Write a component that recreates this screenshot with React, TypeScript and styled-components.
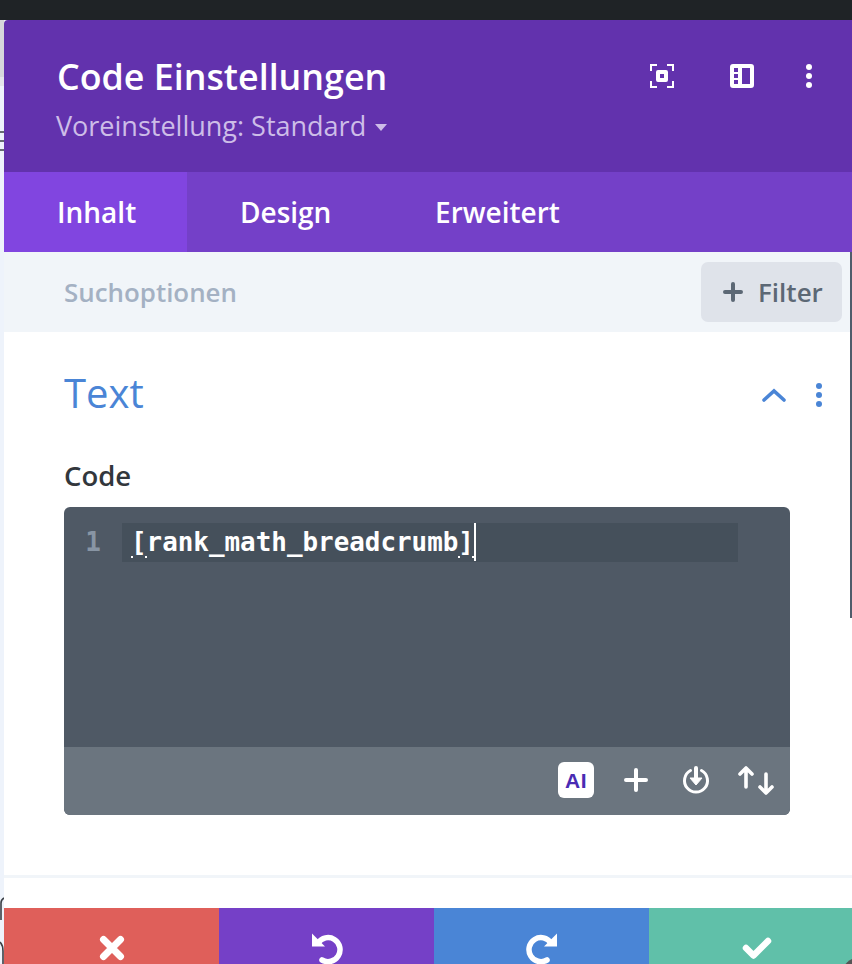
import React from "react";
import styled, { createGlobalStyle } from "styled-components";

const Global = createGlobalStyle`
  html, body { margin: 0; padding: 0; width: 852px; height: 964px; overflow: hidden; background: #eef3fb; }
  * { box-sizing: border-box; }
`;

const Page = styled.div`
  width: 852px; height: 964px; overflow: hidden; position: relative;
  display: flex; flex-direction: column;
  font-family: "Open Sans", sans-serif;
`;
const TopBar = styled.div`height: 20px; flex: none; background: #1f2326;`;
const Stage = styled.div`flex: 1; display: flex; min-height: 0;`;
const Backdrop = styled.div`
  width: 4px; flex: none; display: flex; flex-direction: column; background: #eef3fb;
`;
const BackdropBand = styled.div<{ $h: number; $c: string }>`
  height: ${p => p.$h}px; background: ${p => p.$c}; flex: none;
`;
const BackdropArt = styled.svg`display: block; flex: none;`;
const Modal = styled.div`
  width: 860px; flex: none; display: flex; flex-direction: column;
  background: #fff; border-top-left-radius: 4px; overflow: hidden; position: relative;
`;
const Header = styled.header`
  height: 152px; flex: none; background: #6232ad;
  padding: 31px 52px 0 53px; display: flex; justify-content: space-between;
`;
const HeaderText = styled.div`display: flex; flex-direction: column;`;
const Title = styled.h1`
  margin: 0; font-size: 35.800px; line-height: 50px; font-weight: 550; color: #fff; white-space: nowrap;
`;
const Preset = styled.div`
  margin-top: 7px; margin-left: -1px; font-size: 27px; line-height: 36px; font-weight: 520; color: #cdbde8;
  display: flex; align-items: center; gap: 9px; white-space: nowrap;
`;
const Caret = styled.span`
  width: 0; height: 0; border-left: 6px solid transparent; border-right: 6px solid transparent;
  border-top: 7px solid #cdbde8; margin-top: 3px;
`;
const HeaderIcons = styled.div`
  display: flex; align-items: center; height: 24px; margin-top: 13px;
`;
const HeaderIcon = styled.svg<{ $ml?: number }>`margin-left: ${p => p.$ml ?? 0}px; display: block; flex: none;`;
const Tabs = styled.nav`
  height: 80px; flex: none; background: #7440c8; display: flex;
`;
const Tab = styled.div<{ $active?: boolean; $w: number; $pl: number }>`
  width: ${p => p.$w}px; padding-left: ${p => p.$pl}px; display: flex; align-items: center;
  background: ${p => (p.$active ? "#8145e0" : "transparent")};
  font-size: 28px; font-weight: 570; color: #fff; white-space: nowrap;
`;
const SearchBar = styled.div`
  height: 80px; flex: none; background: #f1f5f9; display: flex; align-items: center;
  justify-content: space-between; padding: 0 22px 0 60px;
`;
const SearchHint = styled.span`font-size: 25.900px; font-weight: 550; color: #a4b1c3;`;
const FilterButton = styled.div`
  width: 141px; height: 60px; border-radius: 7px; background: #dfe3ea;
  display: flex; align-items: center; padding-left: 22px; gap: 15px;
  font-size: 26px; font-weight: 550; color: #5c6875;
`;
const Panel = styled.section`
  flex: 1; display: flex; flex-direction: column; padding: 0 0 0 60px; min-height: 0;
`;
const SectionHead = styled.div`
  height: 126px; width: 770px; flex: none; display: flex; align-items: center; justify-content: space-between;
`;
const SectionTitle = styled.h2`
  margin: -4px 0 0; font-size: 40px; font-weight: 400; color: #4a85d6; line-height: 50px;
`;
const SectionTools = styled.div`display: flex; align-items: center; gap: 30px; margin-right: 12px;`;
const FieldLabel = styled.div`
  font-size: 27.500px; font-weight: 570; color: #32373c; line-height: 36px; height: 49px;
`;
const Editor = styled.div`
  width: 726px; height: 308px; flex: none; border-radius: 6px; overflow: hidden; background: #4f5965;
  display: flex; flex-direction: column;
`;
const EditorBody = styled.div`flex: 1; display: flex; padding-top: 16px;`;
const Gutter = styled.div`
  width: 58px; flex: none; padding-right: 21px; text-align: right; color: #8895a4;
  font: 700 26px/39px "DejaVu Sans Mono", monospace;
`;
const ActiveLine = styled.div`
  width: 616px; height: 39px; background: #45505b; padding-left: 9px;
  color: #fff; font: 700 25.900px/38px "DejaVu Sans Mono", monospace; white-space: pre; display: flex;
`;
const Bracket = styled.span`
  position: relative;
  &::before, &::after {
    content: ""; position: absolute; bottom: 4px; width: 2px; height: 2px; background: #fff;
  }
  &::before { left: 0; }
  &::after { right: 0; }
`;
const Cursor = styled.span`width: 2px; height: 38px; background: #fff; flex: none;`;
const EditorTools = styled.div`
  height: 68px; flex: none; background: #6b757f; display: flex; align-items: center;
  justify-content: flex-end; padding: 0 15px 2px 0;
`;
const AiTile = styled.div`
  width: 36px; height: 36px; background: #fff; border-radius: 6px; display: flex; align-items: center; justify-content: center;
  font: 700 21px/1 "Liberation Sans", sans-serif; color: #4a2bb3; letter-spacing: 0.5px;
`;
const ToolIcon = styled.svg<{ $ml: number }>`margin-left: ${p => p.$ml}px; display: block; flex: none;`;
const FooterGap = styled.div`
  height: 33px; flex: none; margin: auto 0 0 -60px; border-top: 3px solid #f1f5f9;
`;
const Footer = styled.footer`
  height: 80px; flex: none; display: grid; grid-template-columns: repeat(4, 215px); margin-bottom: -24px;
`;
const FooterButton = styled.div<{ $c: string }>`
  background: ${p => p.$c}; display: flex; align-items: center; justify-content: center;
`;
const Scrollbar = styled.div`
  position: absolute; left: 850px; top: 252px; width: 2px; height: 366px; background: #4f5c6b;
`;
const CornerBlob = styled.div`
  position: absolute; left: 842px; top: 958px; width: 32px; height: 32px; border-radius: 50%; background: #555;
`;

const Dots = ({ c, ...rest }: { c: string } & React.SVGProps<SVGSVGElement>) => (
  <svg width="6" height="24" viewBox="0 0 6 24" {...rest}>
    <circle cx="3" cy="3" r="3" fill={c} />
    <circle cx="3" cy="12" r="3" fill={c} />
    <circle cx="3" cy="21" r="3" fill={c} />
  </svg>
);

export default function App() {
  return (
    <Page>
      <Global />
      <TopBar />
      <Stage>
        <Backdrop>
          <BackdropBand $h={57} $c="#d6d7db" />
          <BackdropBand $h={9} $c="#e4e5ea" />
          <BackdropBand $h={45} $c="#eef3fb" />
          <BackdropBand $h={2} $c="#666c72" />
          <BackdropBand $h={7} $c="#eef3fb" />
          <BackdropBand $h={2} $c="#666c72" />
          <BackdropBand $h={7} $c="#eef3fb" />
          <BackdropBand $h={2} $c="#666c72" />
          <BackdropBand $h={746} $c="#eef3fb" />
          <BackdropArt width="4" height="67" viewBox="0 0 4 67" fill="none">
            <path d="M1 23V6Q1 3 4 1M0 45Q3 48 3 54V67" stroke="#3a3f45" strokeWidth="1.600" />
          </BackdropArt>
        </Backdrop>
        <Modal>
          <Header>
            <HeaderText>
              <Title>Code Einstellungen</Title>
              <Preset>Voreinstellung: Standard<Caret /></Preset>
            </HeaderText>
            <HeaderIcons>
              <HeaderIcon width="24" height="24" viewBox="0 0 24 24" fill="none">
                <path d="M1 7V1h6M17 1h6v6M23 17v6h-6M7 23H1v-6" stroke="#fff" strokeWidth="2" />
                <path fillRule="evenodd" clipRule="evenodd" d="M8 6h8a2 2 0 0 1 2 2v8a2 2 0 0 1-2 2H8a2 2 0 0 1-2-2V8a2 2 0 0 1 2-2zm2 4v4h4v-4z" fill="#fff" />
              </HeaderIcon>
              <HeaderIcon $ml={56} width="24" height="24" viewBox="0 0 24 24">
                <path fillRule="evenodd" clipRule="evenodd" fill="#fff" d="M3 0h18a3 3 0 0 1 3 3v18a3 3 0 0 1-3 3H3a3 3 0 0 1-3-3V3a3 3 0 0 1 3-3zm1 4v4h4V4zm0 6v4h4v-4zm0 6v4h4v-4zM12 4v16h8V4z" />
              </HeaderIcon>
              <Dots c="#fff" style={{ marginLeft: 52, flex: "none" }} />
            </HeaderIcons>
          </Header>
          <Tabs>
            <Tab $active $w={183} $pl={53}>Inhalt</Tab>
            <Tab $w={195} $pl={53}>Design</Tab>
            <Tab $w={300} $pl={53}>Erweitert</Tab>
          </Tabs>
          <SearchBar>
            <SearchHint>Suchoptionen</SearchHint>
            <FilterButton>
              <svg width="20" height="20" viewBox="0 0 20 20"><path d="M10 2v16M2 10h16" stroke="#5c6875" strokeWidth="4" strokeLinecap="round" /></svg>
              Filter
            </FilterButton>
          </SearchBar>
          <Panel>
            <SectionHead>
              <SectionTitle>Text</SectionTitle>
              <SectionTools>
                <svg width="24" height="14" viewBox="0 0 24 14" fill="none"><path d="M2 12 12 3l10 9" stroke="#4a85d6" strokeWidth="3.600" strokeLinecap="round" /></svg>
                <Dots c="#4a85d6" />
              </SectionTools>
            </SectionHead>
            <FieldLabel>Code</FieldLabel>
            <Editor>
              <EditorBody>
                <Gutter>1</Gutter>
                <ActiveLine>
                  <Bracket>[</Bracket>rank_math_breadcrumb<Bracket>]</Bracket><Cursor />
                </ActiveLine>
              </EditorBody>
              <EditorTools>
                <AiTile>AI</AiTile>
                <ToolIcon $ml={30} width="24" height="24" viewBox="0 0 24 24"><path d="M12 2v20M2 12h20" stroke="#fff" strokeWidth="4" strokeLinecap="round" /></ToolIcon>
                <ToolIcon $ml={34} width="28" height="28" viewBox="0 0 28 28" fill="none">
                  <path d="M8.500 4.500a11.500 11.500 0 1 0 11 0" stroke="#fff" strokeWidth="3" strokeLinecap="round" />
                  <path d="M14 2v12" stroke="#fff" strokeWidth="4" strokeLinecap="round" />
                  <path d="M8 12h12l-6 7z" fill="#fff" stroke="#fff" strokeLinejoin="round" />
                </ToolIcon>
                <ToolIcon $ml={28} width="37" height="30" viewBox="0 0 37 30" fill="none">
                  <path d="M8 3v19M2 9l6-6 6 6" stroke="#fff" strokeWidth="3.600" strokeLinecap="round" strokeLinejoin="round" />
                  <path d="M28 9v19M22 22l6 6 6-6" stroke="#fff" strokeWidth="3.600" strokeLinecap="round" strokeLinejoin="round" />
                </ToolIcon>
              </EditorTools>
            </Editor>
            <FooterGap />
          </Panel>
          <Footer>
            <FooterButton $c="#df5f5a">
              <svg width="26" height="26" viewBox="0 0 26 26"><path d="M4.500 4.500l17 17M21.500 4.500l-17 17" stroke="#fff" strokeWidth="7" strokeLinecap="round" /></svg>
            </FooterButton>
            <FooterButton $c="#7540c7">
              <svg width="32" height="32" viewBox="0 0 32 32" fill="none">
                <path d="M7 11a12 12 0 1 1 4 17" stroke="#fff" strokeWidth="5.500" strokeLinecap="round" />
                <path d="M1 1.500v13h13z" fill="#fff" />
              </svg>
            </FooterButton>
            <FooterButton $c="#4a85d6">
              <svg width="32" height="32" viewBox="0 0 32 32" fill="none">
                <path d="M25 11a12 12 0 1 0-4 17" stroke="#fff" strokeWidth="5.500" strokeLinecap="round" />
                <path d="M31 1.500v13H18z" fill="#fff" />
              </svg>
            </FooterButton>
            <FooterButton $c="#60c0a9">
              <svg width="30" height="24" viewBox="0 0 30 24" fill="none"><path d="M4 12l7.500 7.500L26 5" stroke="#fff" strokeWidth="6.500" strokeLinecap="round" strokeLinejoin="round" /></svg>
            </FooterButton>
          </Footer>
        </Modal>
      </Stage>
      <Scrollbar />
      <CornerBlob />
    </Page>
  );
}
